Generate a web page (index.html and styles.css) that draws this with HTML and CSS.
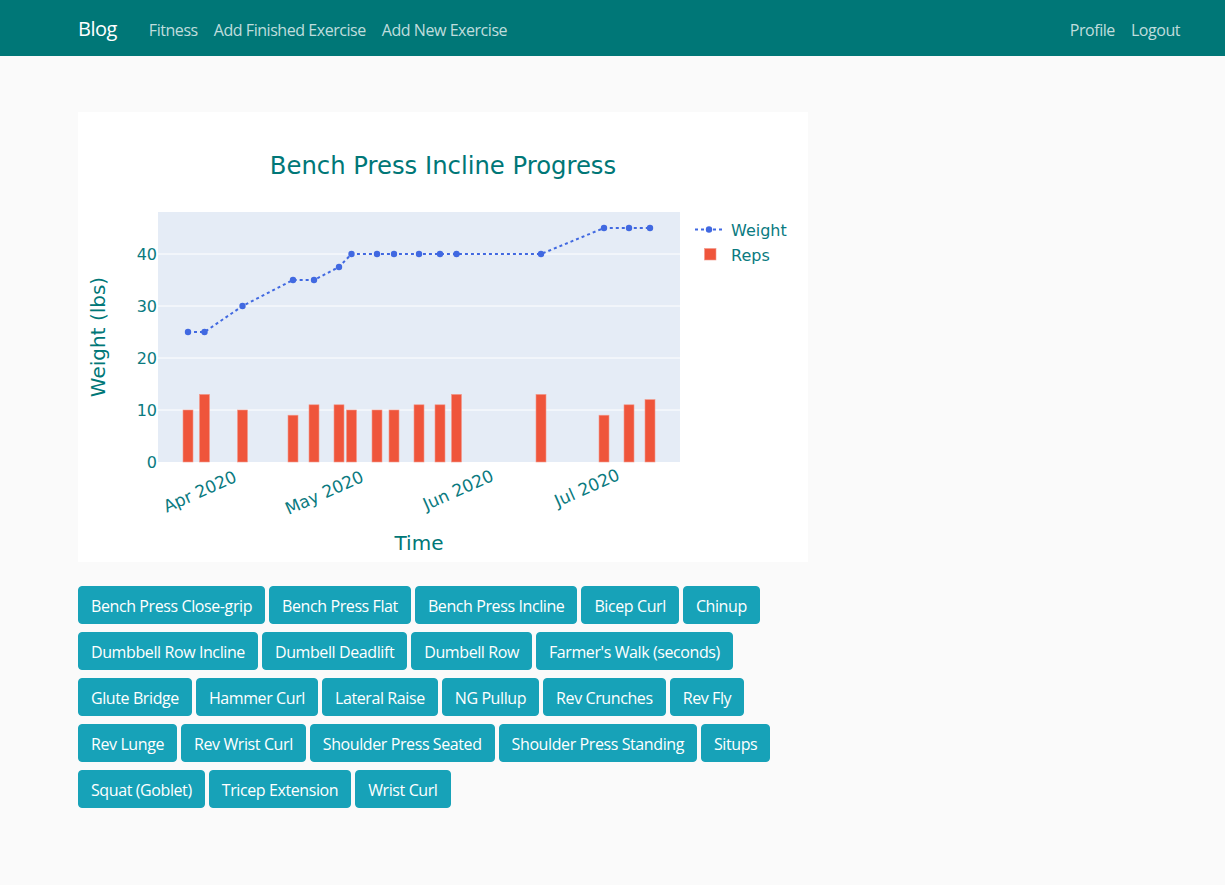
FILE: index.html
```html
<!DOCTYPE html>
<html lang="en">
<head>
<meta charset="utf-8">
<title>Fitness - Blog</title>
<link rel="stylesheet" href="styles.css">
</head>
<body>
<nav class="navbar">
  <a class="brand" href="#">Blog</a>
  <ul class="nav-links">
    <li><a href="#">Fitness</a></li>
    <li><a href="#">Add Finished Exercise</a></li>
    <li><a href="#">Add New Exercise</a></li>
  </ul>
  <ul class="nav-links nav-right">
    <li><a href="#">Profile</a></li>
    <li><a href="#">Logout</a></li>
  </ul>
</nav>

<main class="content">
  <div class="chart">
    <svg width="730" height="450" viewBox="0 0 730 450" xmlns="http://www.w3.org/2000/svg">
      <rect x="80" y="100" width="522" height="250" fill="#e5ecf6"/>
      <g stroke="#ffffff" stroke-width="1">
        <line x1="80" y1="298" x2="602" y2="298"/>
        <line x1="80" y1="246" x2="602" y2="246"/>
        <line x1="80" y1="194" x2="602" y2="194"/>
        <line x1="80" y1="142" x2="602" y2="142"/>
      </g>
      <g fill="#ef553b" stroke="#f29a8c" stroke-width="0.6">
        <rect x="105" y="298" width="10" height="52"/>
        <rect x="121.5" y="282.4" width="10" height="67.6"/>
        <rect x="159.5" y="298" width="10" height="52"/>
        <rect x="210" y="303.2" width="10" height="46.8"/>
        <rect x="231" y="292.8" width="10" height="57.2"/>
        <rect x="256" y="292.8" width="10" height="57.2"/>
        <rect x="268.5" y="298" width="10" height="52"/>
        <rect x="294" y="298" width="10" height="52"/>
        <rect x="311" y="298" width="10" height="52"/>
        <rect x="336" y="292.8" width="10" height="57.2"/>
        <rect x="357" y="292.8" width="10" height="57.2"/>
        <rect x="373.5" y="282.4" width="10" height="67.6"/>
        <rect x="458" y="282.4" width="10" height="67.6"/>
        <rect x="521" y="303.2" width="10" height="46.8"/>
        <rect x="546" y="292.8" width="10" height="57.2"/>
        <rect x="567" y="287.6" width="10" height="62.4"/>
      </g>
      <polyline fill="none" stroke="#4169e1" stroke-width="2" stroke-dasharray="3 3"
        points="110,220 126.5,220 164.5,194 215,168 236,168 261,155 273.5,142 299,142 316,142 341,142 362,142 378.5,142 463,142 526,116 551,116 572,116"/>
      <g fill="#4169e1">
        <circle cx="110" cy="220" r="3.2"/>
        <circle cx="126.5" cy="220" r="3.2"/>
        <circle cx="164.5" cy="194" r="3.2"/>
        <circle cx="215" cy="168" r="3.2"/>
        <circle cx="236" cy="168" r="3.2"/>
        <circle cx="261" cy="155" r="3.2"/>
        <circle cx="273.5" cy="142" r="3.2"/>
        <circle cx="299" cy="142" r="3.2"/>
        <circle cx="316" cy="142" r="3.2"/>
        <circle cx="341" cy="142" r="3.2"/>
        <circle cx="362" cy="142" r="3.2"/>
        <circle cx="378.5" cy="142" r="3.2"/>
        <circle cx="463" cy="142" r="3.2"/>
        <circle cx="526" cy="116" r="3.2"/>
        <circle cx="551" cy="116" r="3.2"/>
        <circle cx="572" cy="116" r="3.2"/>
      </g>
      <g class="tick" text-anchor="end">
        <text x="79" y="356">0</text>
        <text x="79" y="304">10</text>
        <text x="79" y="252">20</text>
        <text x="79" y="200">30</text>
        <text x="79" y="148">40</text>
      </g>
      <g class="tick xtick" text-anchor="end">
        <text x="160" y="369" transform="rotate(-24 160 369)">Apr 2020</text>
        <text x="287" y="369" transform="rotate(-24 287 369)">May 2020</text>
        <text x="417" y="368" transform="rotate(-24 417 368)">Jun 2020</text>
        <text x="543" y="367" transform="rotate(-24 543 367)">Jul 2020</text>
      </g>
      <text class="title" x="365" y="62" text-anchor="middle">Bench Press Incline Progress</text>
      <text class="axis-title" x="27" y="225" text-anchor="middle" transform="rotate(-90 27 225)">Weight (lbs)</text>
      <text class="axis-title" x="341" y="438" text-anchor="middle">Time</text>
      <line x1="617" y1="117.5" x2="645" y2="117.5" stroke="#4169e1" stroke-width="2" stroke-dasharray="3 3"/>
      <circle cx="631" cy="117.5" r="3.2" fill="#4169e1"/>
      <text class="legend" x="653" y="124">Weight</text>
      <rect x="626.5" y="136.5" width="11.5" height="11.5" fill="#ef553b" stroke="#f29a8c" stroke-width="0.6"/>
      <text class="legend" x="653" y="149">Reps</text>
    </svg>
  </div>

  <div class="exercise-list">
    <a class="btn" href="#">Bench Press Close-grip</a>
    <a class="btn" href="#">Bench Press Flat</a>
    <a class="btn" href="#">Bench Press Incline</a>
    <a class="btn" href="#">Bicep Curl</a>
    <a class="btn" href="#">Chinup</a>
    <a class="btn" href="#">Dumbbell Row Incline</a>
    <a class="btn" href="#">Dumbell Deadlift</a>
    <a class="btn" href="#">Dumbell Row</a>
    <a class="btn" href="#">Farmer's Walk (seconds)</a>
    <a class="btn" href="#">Glute Bridge</a>
    <a class="btn" href="#">Hammer Curl</a>
    <a class="btn" href="#">Lateral Raise</a>
    <a class="btn" href="#">NG Pullup</a>
    <a class="btn" href="#">Rev Crunches</a>
    <a class="btn" href="#">Rev Fly</a>
    <a class="btn" href="#">Rev Lunge</a>
    <a class="btn" href="#">Rev Wrist Curl</a>
    <a class="btn" href="#">Shoulder Press Seated</a>
    <a class="btn" href="#">Shoulder Press Standing</a>
    <a class="btn" href="#">Situps</a>
    <a class="btn" href="#">Squat (Goblet)</a>
    <a class="btn" href="#">Tricep Extension</a>
    <a class="btn" href="#">Wrist Curl</a>
  </div>
</main>
</body>
</html>
```

FILE: styles.css
```css
* {
  box-sizing: border-box;
}

html, body {
  margin: 0;
  padding: 0;
}

body {
  background: #fafafa;
  font-family: "Open Sans", "Noto Sans", "Liberation Sans", sans-serif;
  font-size: 16px;
  line-height: 24px;
  color: #212529;
}

a {
  text-decoration: none;
}

.navbar {
  display: flex;
  align-items: center;
  height: 56px;
  background: #007777;
  padding: 4px 37px 0 78px;
}

.brand {
  color: #ffffff;
  font-size: 20px;
  line-height: 30px;
  margin-right: 24px;
  padding-bottom: 2px;
  letter-spacing: -0.5px;
}

.nav-links {
  display: flex;
  list-style: none;
  margin: 0;
  padding: 0;
}

.nav-links a {
  display: block;
  padding: 8px 8px;
  color: rgba(255, 255, 255, 0.76);
  letter-spacing: -0.45px;
}

.nav-right {
  margin-left: auto;
}

.content {
  padding: 56px 0 40px 78px;
}

.chart {
  width: 730px;
  height: 450px;
  background: #ffffff;
}

.chart svg {
  display: block;
}

.chart text {
  font-family: "DejaVu Sans", Verdana, sans-serif;
  fill: #0a7a80;
}

.chart .tick {
  font-size: 16px;
}

.chart .xtick {
  font-size: 17px;
}

.chart .title {
  font-size: 24.3px;
  fill: #007777;
}

.chart .axis-title {
  font-size: 20px;
  fill: #007777;
}

.chart .legend {
  font-size: 16px;
}

.exercise-list {
  display: flex;
  flex-wrap: wrap;
  width: 730px;
  row-gap: 8px;
  column-gap: 4px;
  margin-top: 24px;
}

.btn {
  display: inline-block;
  padding: 7px 12px 5px;
  font-size: 16px;
  line-height: 24px;
  color: #ffffff;
  background: #17a2b8;
  border: 1px solid #17a2b8;
  border-radius: 4px;
  letter-spacing: -0.4px;
}
```
